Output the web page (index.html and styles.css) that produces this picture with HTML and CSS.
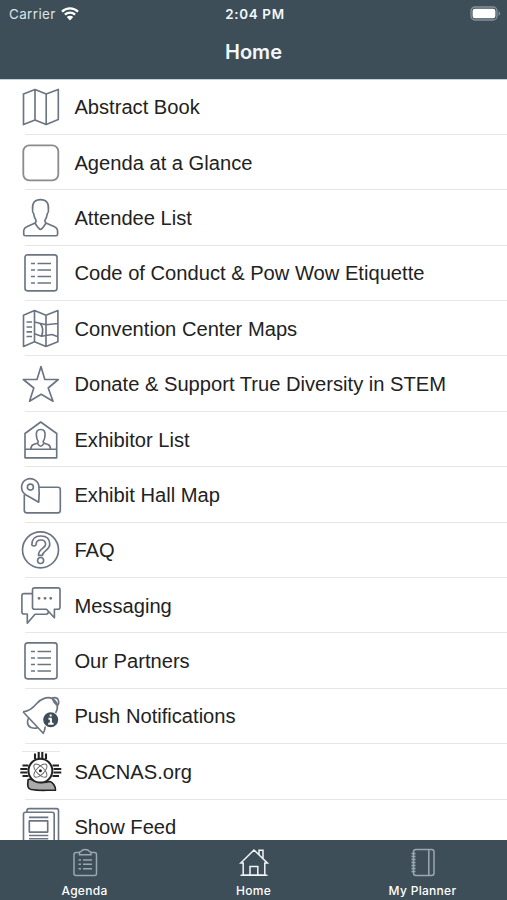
FILE: index.html
```
<!DOCTYPE html>
<html lang="en">
<head>
<meta charset="utf-8">
<title>Home</title>
<link rel="stylesheet" href="styles.css">
</head>
<body>
<div class="app">
<header class="header">
<div class="status">
<div class="carrier"><span>Carrier</span>
<svg class="wifi" viewBox="0 0 18 14"><path d="M1 4.7a11.5 11.5 0 0 1 16 0M3.9 7.7a7.4 7.4 0 0 1 10.2 0" fill="none" stroke="#fff" stroke-width="2.3"/><path d="M5.8 10.1a4.6 4.6 0 0 1 6.4 0L9 13.5z" fill="#fff"/></svg></div>
<div class="time">2:04 PM</div>
<div class="power"><svg class="battery" viewBox="0 0 31 15"><rect x="1" y="1" width="26" height="13" rx="4" fill="none" stroke="#87919a" stroke-width="1.3"/><rect x="2.6" y="2.7" width="22.8" height="9.6" rx="2.2" fill="#fff"/><path d="M28.6 5q3 2.5 0 5z" fill="#87919a"/></svg></div>
</div>
<h1 class="title">Home</h1>
</header>
<main class="list">
<div class="row"><svg class="icon" viewBox="0 0 44 44"><path d="M4.5 9 16 4.4 27.2 9 39.3 4.4v30.2L27.2 39.6 16 35 4.5 39.6zM16 4.4V35M27.2 9v30.6"/></svg><span class="label">Abstract Book</span></div>
<div class="row"><svg class="icon plain" viewBox="0 0 44 44"><rect x="4.3" y="4.3" width="35" height="35" rx="6"/></svg><span class="label">Agenda at a Glance</span></div>
<div class="row"><svg class="icon" viewBox="0 0 44 44"><path d="M17 24.200C15.200 21.500 14.900 19 14.600 17.500Q13.200 16.500 13.600 13.500C12.900 6.500 16 3.600 21.500 3.600S30.100 6.500 29.400 13.500Q29.800 16.500 28.400 17.500C28.100 19 27.800 21.500 26 24.200Q25.500 26.300 27.500 27.200L35 30.500Q38.600 32 38.600 35.500V38Q38.600 39.700 37 39.700H6.300Q4.700 39.700 4.700 38V35.500Q4.700 32 8.300 30.500L15.500 27.200Q17.500 26.300 17 24.200M16 27Q19.500 33 21.500 33.500 23.500 33 27 27"/></svg><span class="label">Attendee List</span></div>
<div class="row"><svg class="icon" viewBox="0 0 44 44"><rect x="6" y="3.8" width="32" height="36" rx="2.5"/><path d="M12 12.500h4M18.500 12.500h13.500M12 19h4M18.500 19h13.500M12 25.500h4M18.500 25.500h13.500M12 32h4M18.500 32h13.500"/></svg><span class="label">Code of Conduct &amp; Pow Wow Etiquette</span></div>
<div class="row"><svg class="icon" viewBox="0 0 44 44"><path d="M4.500 8.200 15.500 3.600 27 8.300 38.900 3.600V34.800L27 39.500 15.500 34.800 4.500 39.500zM15.500 3.600V34.800M27 8.300V39.500M15.500 15 27 17.800 38.900 16.500M15.500 26.800 22.500 29.300 27 28.500 33 27.500 38.900 29.800M21 16.500Q25.500 21 22.500 29.300"/><path d="M7.500 15H13M7.500 20H13M7.500 24.800H13M7.500 29.500H13"/></svg><span class="label">Convention Center Maps</span></div>
<div class="row"><svg class="icon" viewBox="0 0 44 44"><path d="M22 4.500 25.800 17.500H39.300L29.200 26 34 39.200 22.200 32.300 10.500 39.200 14.800 26 4.300 17.500H18z"/></svg><span class="label">Donate &amp; Support True Diversity in STEM</span></div>
<div class="row"><svg class="icon" viewBox="0 0 44 44"><path d="M6 15.500 21.700 4 37.700 15.500V39.800H6zM6 31.200H37.700"/><path d="M19.300 23.400Q17.600 21.300 17.500 18.500C16.700 13 18.500 11.500 21.700 11.500S26.700 13 25.900 18.500Q25.800 21.300 24.100 23.400 24 25 26 25.500L29 26.500Q31.500 27.500 31.500 31.200M19.300 23.400Q19.400 25 17.400 25.500L14.400 26.500Q11.900 27.500 11.900 31.200M18.500 25.400Q21.700 31 24.900 25.400"/></svg><span class="label">Exhibitor List</span></div>
<div class="row"><svg class="icon" viewBox="0 0 44 44"><path d="M20 14.200H39Q41.300 14.200 41.300 16.500V37.500Q41.300 39.800 39 39.800H7.600Q5.300 39.800 5.300 37.500V21.500"/><path d="M19.700 29.200 6.700 21.700A8.700 8.700 0 1 1 19.800 12.500Q20.600 20 19.700 29.200z"/><circle cx="11.400" cy="14.100" r="3"/></svg><span class="label">Exhibit Hall Map</span></div>
<div class="row"><svg class="icon" viewBox="0 0 44 44"><circle cx="21.500" cy="21.800" r="18"/><path d="M12.800 17Q12.800 8 21.800 8 30.800 8 30.800 16.300C30.800 22.500 23.500 22.500 23.500 27.300H19.500C19 20.500 26.600 20.500 26.600 16.200Q26.600 12 21.800 12 17 12 17 17Q15 19 12.800 17z"/><circle cx="21.600" cy="32.500" r="3"/></svg><span class="label">FAQ</span></div>
<div class="row"><svg class="icon" viewBox="0 0 44 44"><path d="M15.500 3.800H39Q41 3.800 41 5.800V23.200Q41 25.200 39 25.200H35.400V33.800L27.500 25.200H15.500Q13.500 25.200 13.500 23.200V5.800Q13.500 3.800 15.500 3.800zM13.500 9.600H5Q2.900 9.600 2.900 11.600V28Q2.900 30 5 30H8.300V39.200L16 30.200H27Q29.300 30.200 29.300 27.500"/><path class="dots" d="M20 14.300h.1M26 14.300h.1M31.700 14.300h.1"/></svg><span class="label">Messaging</span></div>
<div class="row"><svg class="icon" viewBox="0 0 44 44"><rect x="6" y="3.800" width="32" height="36" rx="2.500"/><path d="M12 12.500h4M18.500 12.500h13.500M12 19h4M18.500 19h13.500M12 25.500h4M18.500 25.500h13.500M12 32h4M18.500 32h13.500"/></svg><span class="label">Our Partners</span></div>
<div class="row"><svg class="icon" viewBox="0 0 44 44"><path d="M4 17.800C10 17.500 14 14 17.500 9.800 22 4.500 28.500 2.300 33 4.600 38.500 7.500 40 14 36.500 19M4 17.800 24.200 39.300Q26 36.500 26.200 32.500M32 4.300Q38 2.500 39.300 6 40.500 9 38.300 12M33.500 5Q35 9.500 38.300 11.500M9.500 24Q6.500 31 12 33.500 16 35 18.800 33.500"/><circle class="solid" cx="31.700" cy="25.800" r="7.500"/><path class="info" d="M31.700 21.400v.1M30.500 24.700h1.400v5.100M30.200 29.800h3.300"/></svg><span class="label">Push Notifications</span></div>
<div class="row logo"><svg class="icon dark" viewBox="0 0 44 44"><path class="rays" d="M16 9V3.500M19.700 8V2M23.300 8V2M27 9V3.500M9.500 15.500H3.500M8.500 19H1.300M8.500 22.500H1.300M9.500 26H3.500M33.500 15.500H40M34.500 19H42.300M34.500 22.500H42.300M33.500 26H40"/><path class="base" d="M9.200 29.500Q7.500 39 12 39.500C20 41 28 40 36.500 40.300 36.700 35.500 33.500 32.300 31 31.500Q20 34 11.500 29z"/><circle class="disc" cx="21.400" cy="20.700" r="11.900"/><g class="atom"><ellipse cx="21.400" cy="20.700" rx="8.500" ry="3.800" transform="rotate(45 21.400 20.700)"/><ellipse cx="21.400" cy="20.700" rx="8.500" ry="3.800" transform="rotate(-45 21.400 20.700)"/></g><circle class="core" cx="21.400" cy="20.700" r="1.500"/></svg><span class="label">SACNAS.org</span></div>
<div class="row"><svg class="icon" viewBox="0 0 44 44"><path d="M8 7.200V5.500Q8 3.600 10 3.600H37.500Q39.500 3.600 39.500 5.500V40H34"/><rect x="4.500" y="7.200" width="30.700" height="34" rx="2"/><rect x="10.300" y="15.800" width="18.400" height="11.300"/><path d="M10 12.300H29.300M10 30.500H29.300M10 33.700H29.300"/></svg><span class="label">Show Feed</span></div>
</main>
<nav class="tabs">
<a class="tab dim"><svg class="tabicon" viewBox="0 0 30 30"><path d="M9 4.500H6Q4 4.500 4 6.500V25.500Q4 27.500 6 27.500H24.500Q26.500 27.500 26.500 25.500V6.500Q26.500 4.500 24.500 4.500H21.500M9.500 6.700V4.500Q9.500 3.500 11 3.500Q12 1.500 15.200 1.500T19.500 3.500Q21 3.500 21 4.500V6.700zM8.500 12h2.500M13 12h9M8.500 16.300h2.500M13 16.300h9M8.500 20.700h2.500M13 20.700h9"/></svg><span>Agenda</span></a>
<a class="tab"><svg class="tabicon" viewBox="0 0 30 30"><path d="M1.800 15 15 2 28.300 15H25.800V27H4.200V15zM20 6.500V2.300H24V10.800M11 27V18.500H18.800V27M1.500 27.300H28.500"/></svg><span>Home</span></a>
<a class="tab dim"><svg class="tabicon" viewBox="0 0 30 30"><rect x="5.500" y="1.500" width="20.500" height="26" rx="2.500"/><path d="M20.800 1.500v26M3.500 5.500h4M3.500 8.500h4M3.500 11.500h4M3.500 14.500h4M3.500 17.500h4M3.500 20.500h4M3.500 23.500h4"/></svg><span>My Planner</span></a>
</nav>
</div>
</body>
</html>
```
FILE: styles.css
```
* { box-sizing: border-box; }
body { margin: 0; background: #fff; }
.app {
  display: flex;
  flex-direction: column;
  width: 507px;
  height: 900px;
  overflow: hidden;
  font-family: "Liberation Sans", Arial, sans-serif;
}
.header {
  flex: 0 0 79px;
  background: #3d4e59;
  color: #f2f8fc;
  font-family: Inter, sans-serif;
}
.status {
  display: grid;
  grid-template-columns: 1fr auto 1fr;
  align-items: center;
  height: 27px;
  padding: 0 6px 0 9px;
  font-size: 13.4px;
}
.carrier { display: flex; align-items: center; gap: 5px; color: #dce4ea; letter-spacing: .4px; }
.wifi { width: 18px; height: 14px; }
.time { font-weight: 600; letter-spacing: .65px; }
.power { display: flex; justify-content: flex-end; }
.battery { width: 31px; height: 15px; }
.title {
  margin: 0;
  height: 50px;
  line-height: 51px;
  text-align: center;
  font-size: 20px;
  font-weight: 600;
}
.list {
  flex: 1;
  min-height: 0;
  overflow: hidden;
  padding-top: .5px;
  background: linear-gradient(#c3d0d6, #c3d0d6) 0 0 / 100% 1px no-repeat;
}
.row {
  display: flex;
  align-items: center;
  height: 55.4px;
  padding-left: 19px;
  background: linear-gradient(#e6e6e8, #e6e6e8) 25px 100% / 100% 1px no-repeat;
}
.logo {
  background:
    linear-gradient(#e6e6e8, #e6e6e8) 25px 100% / 100% 1px no-repeat,
    linear-gradient(#e6e6e8, #e6e6e8) 22px 7px / 38px 1px no-repeat;
}
.icon {
  flex: none;
  width: 44px;
  height: 44px;
  margin-right: 11.4px;
  fill: none;
  stroke: #6b7582;
  stroke-width: 1.65;
  stroke-linejoin: round;
}
.plain { stroke: #8b8b8d; stroke-width: 1.8; }
.dots { stroke-width: 2.8; stroke-linecap: round; }
.solid { fill: #3d4e59; stroke: none; }
.info { stroke: #fff; stroke-width: 2; stroke-linecap: square; }
.dark { stroke: #222; }
.rays { stroke-width: 2.1; }
.base { fill: #aaa; }
.disc { fill: #fff; stroke-width: 2; }
.atom { stroke: #666; stroke-width: 1; }
.core { fill: #222; stroke: none; }
.label { font-size: 20.15px; color: #222; white-space: nowrap; line-height: 24px; }
.tabs {
  flex: 0 0 60px;
  display: grid;
  grid-template-columns: 1fr 1fr 1fr;
  background: #3d4e59;
  color: #fff;
  font-family: Inter, sans-serif;
  font-size: 12px;
  font-weight: 500;
  letter-spacing: .3px;
}
.tab { display: flex; flex-direction: column; align-items: center; padding-top: 8px; line-height: 15px; gap: 5px; }
.tabicon { width: 30px; height: 30px; fill: none; stroke: #f0f4f6; stroke-width: 1.5; }
.dim .tabicon { stroke: #9ba7b0; }
```
